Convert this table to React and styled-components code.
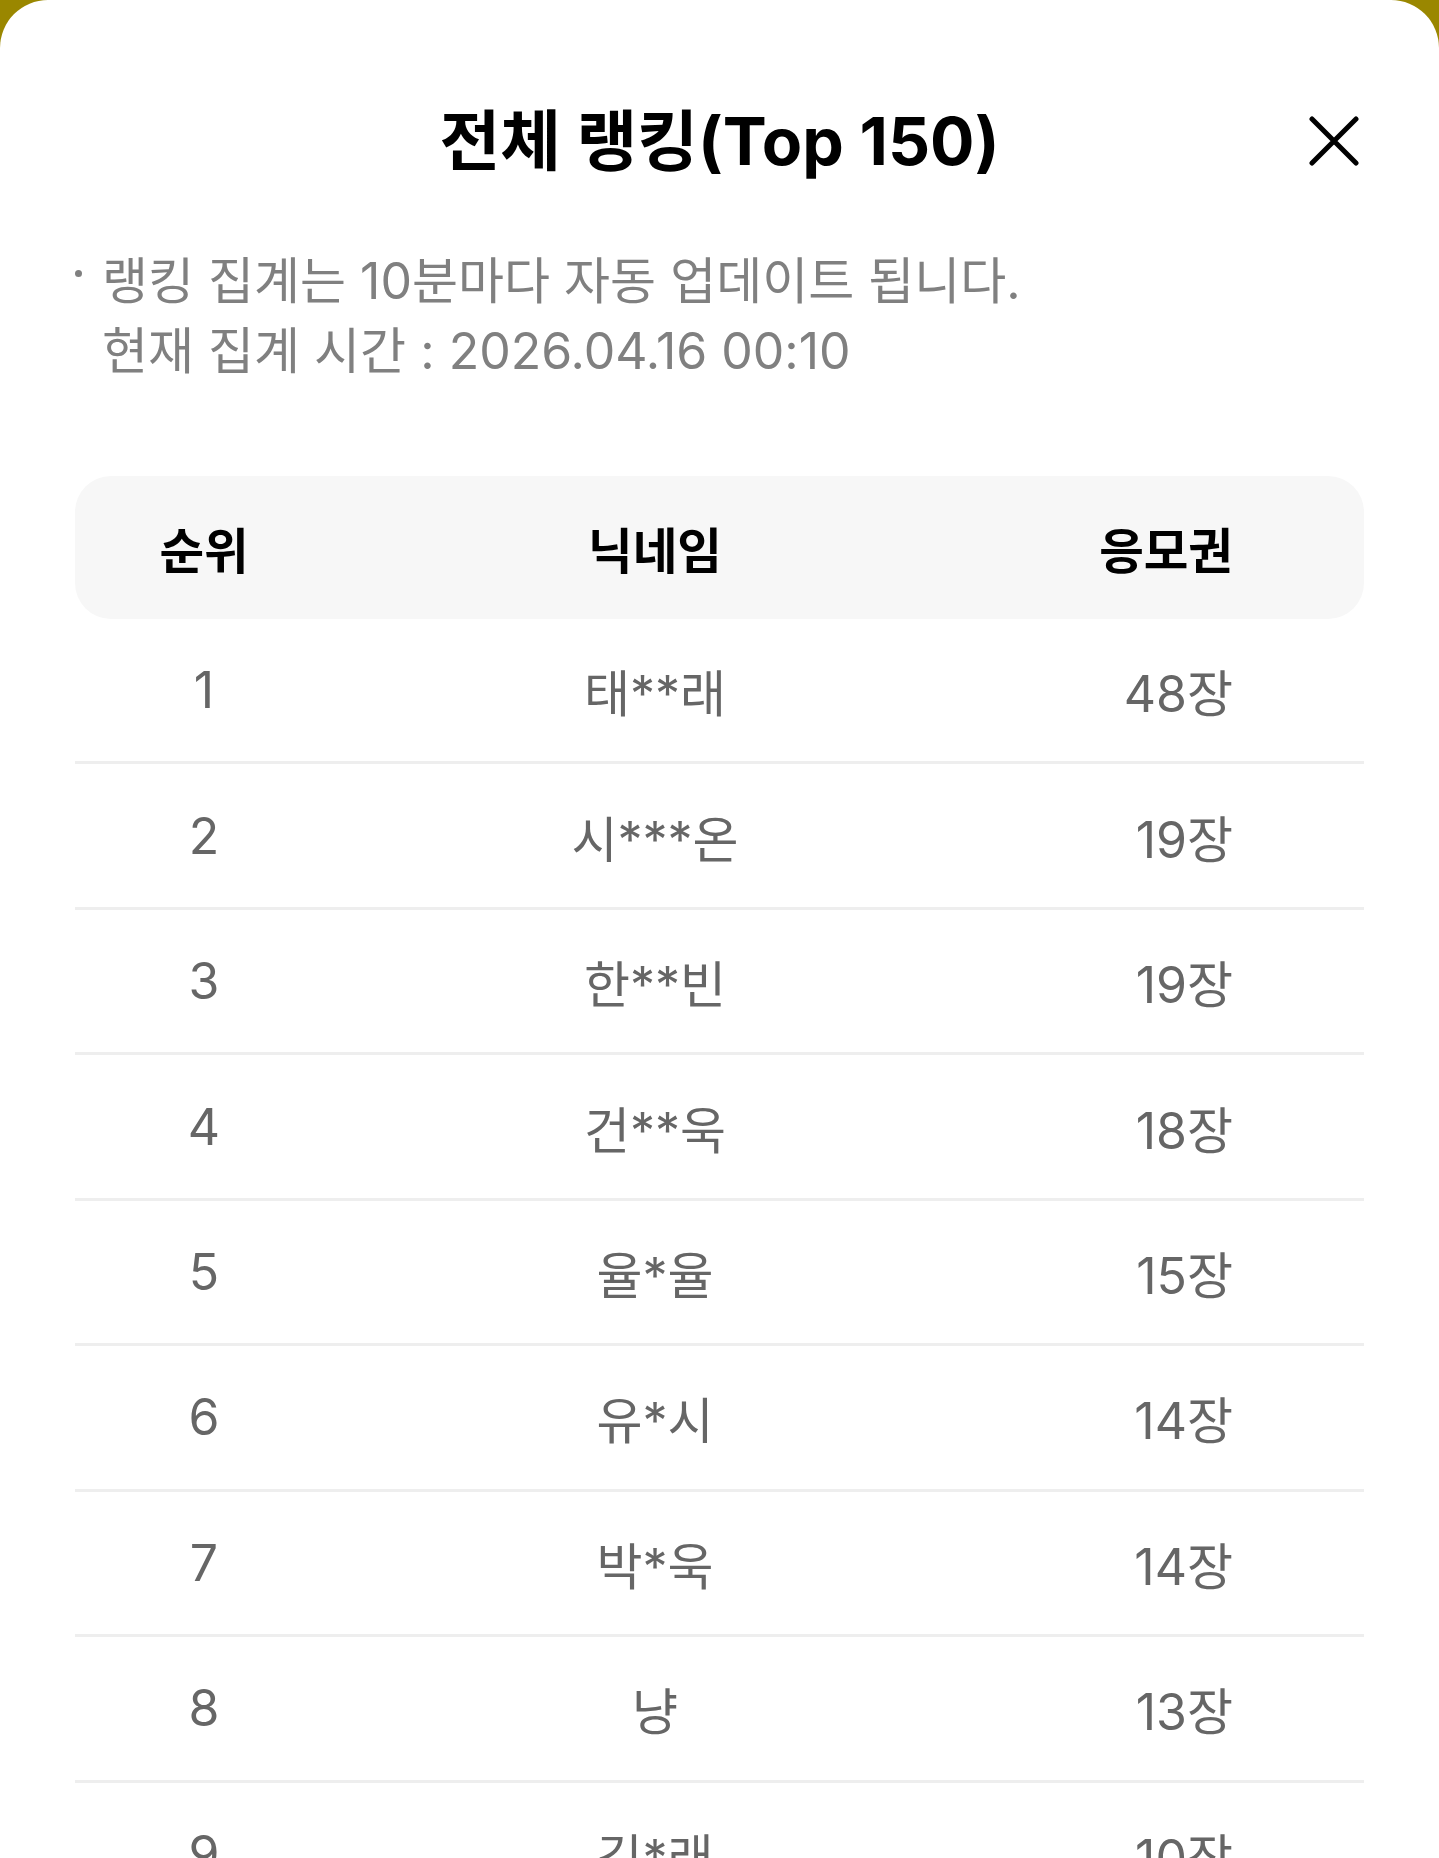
import React from 'react';
import styled, { createGlobalStyle } from 'styled-components';

const GlobalStyle = createGlobalStyle`
  html, body {
    margin: 0;
    padding: 0;
    background: #9a8700;
  }
  body {
    font-family: Inter, 'Noto Sans CJK KR', sans-serif;
  }
`;

const Screen = styled.div`
  height: 1858px;
  overflow: hidden;
`;

const Sheet = styled.div`
  box-sizing: border-box;
  min-height: 1858px;
  background: #ffffff;
  border-radius: 48px 48px 0 0;
  padding: 0 75px;
`;

const Header = styled.div`
  display: grid;
  grid-template-columns: 1fr auto 1fr;
  align-items: center;
  padding-top: 97px;
`;

const Title = styled.h1`
  grid-column: 2;
  margin: 0;
  font-size: 66px;
  font-weight: 700;
  line-height: 88px;
  color: #000000;
`;

const CloseButton = styled.button`
  justify-self: end;
  margin-right: 5px;
  width: 50px;
  height: 50px;
  padding: 0;
  border: none;
  background: none;
  cursor: pointer;
  display: flex;
`;

const Notice = styled.div`
  display: flex;
  align-items: flex-start;
  gap: 20px;
  margin-top: 61px;
  font-size: 50px;
  line-height: 70px;
  color: #808080;
`;

const Bullet = styled.span`
  flex: none;
  width: 7px;
  height: 7px;
  margin-top: 24px;
  border-radius: 50%;
  background: #808080;
`;

const Table = styled.div`
  margin-top: 90px;
`;

const Row = styled.div`
  box-sizing: border-box;
  display: grid;
  grid-template-columns: 258px 644px 1fr;
  align-items: center;
  padding-right: 131px;
  height: ${(p) => (p.head ? '143px' : '145.45px')};
  background: ${(p) => (p.head ? '#f7f7f7' : 'transparent')};
  border-radius: ${(p) => (p.head ? '36px' : '0')};
  border-bottom: ${(p) => (p.head ? 'none' : '3px solid #eeeeee')};
  font-size: ${(p) => (p.head ? '48.5px' : '50px')};
  font-weight: ${(p) => (p.head ? 700 : 400)};
  color: ${(p) => (p.head ? '#000000' : '#666666')};
`;

const Cell = styled.div`
  text-align: ${(p) => p.align || 'center'};
  white-space: nowrap;
`;

const rows = [
  [1, '태**래', 48],
  [2, '시***온', 19],
  [3, '한**빈', 19],
  [4, '건**욱', 18],
  [5, '율*율', 15],
  [6, '유*시', 14],
  [7, '박*욱', 14],
  [8, '냥', 13],
  [9, '김*래', 10],
  [10, '이**준', 9],
];

function CloseIcon() {
  return (
    <svg width="50" height="50" viewBox="0 0 50 50" fill="none">
      <path
        d="M3 3L47 47M47 3L3 47"
        stroke="#000"
        strokeWidth="5"
        strokeLinecap="round"
      />
    </svg>
  );
}

export default function App() {
  return (
    <Screen>
      <GlobalStyle />
      <Sheet>
        <Header>
          <Title>전체 랭킹(Top 150)</Title>
          <CloseButton aria-label="닫기">
            <CloseIcon />
          </CloseButton>
        </Header>
        <Notice>
          <Bullet />
          <div>
            랭킹 집계는 10분마다 자동 업데이트 됩니다.
            <br />
            현재 집계 시간 : 2026.04.16 00:10
          </div>
        </Notice>
        <Table>
          <Row head>
            <Cell>순위</Cell>
            <Cell>닉네임</Cell>
            <Cell align="right">응모권</Cell>
          </Row>
          {rows.map(([rank, name, count]) => (
            <Row key={rank}>
              <Cell>{rank}</Cell>
              <Cell>{name}</Cell>
              <Cell align="right">{count}장</Cell>
            </Row>
          ))}
        </Table>
      </Sheet>
    </Screen>
  );
}
